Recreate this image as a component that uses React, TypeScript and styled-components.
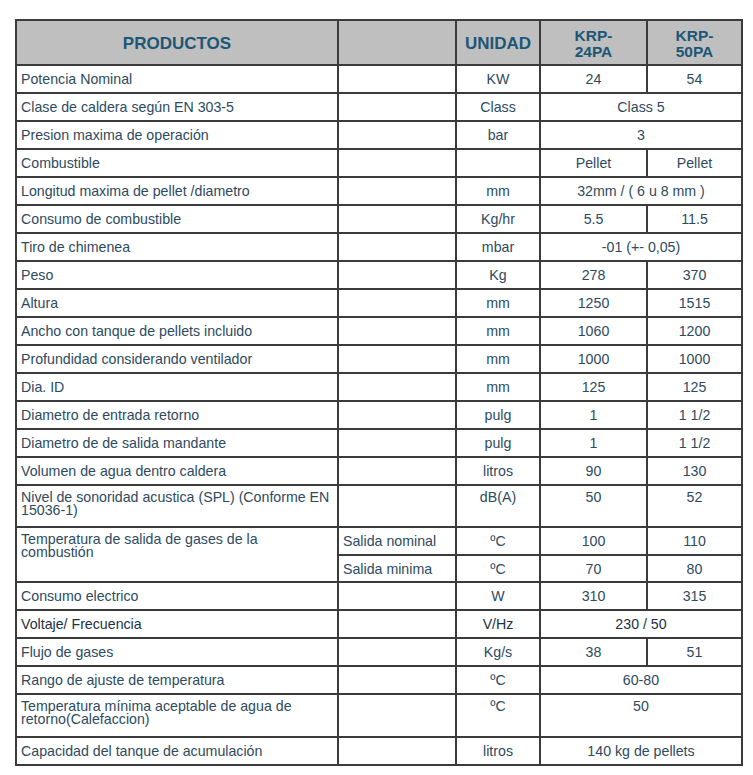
import React from "react"
import styled, { createGlobalStyle } from "styled-components"

const GlobalStyle = createGlobalStyle`
  body {
    margin: 0;
    background: #ffffff;
    font-family: "Liberation Sans", Arial, sans-serif;
  }
`

const Page = styled.div`
  padding: 19px 0 0 15px;
`

const Table = styled.table`
  border-collapse: collapse;
  table-layout: fixed;
  width: 726px;
  font-size: 14.2px;
  color: #2e4a60;
`

const HeadRow = styled.tr`
  height: 45px;
  background: #bfbfbf;
`

const HeadCell = styled.th`
  border: 2px solid #3b3b3b;
  padding: 2px 0 0;
  font-size: 17px;
  font-weight: bold;
  color: #1d5676;
  text-align: center;
  vertical-align: middle;
  line-height: 20px;
`

const ModelLine = styled.span`
  display: block;
  font-size: 15.5px;
  line-height: 15.5px;
`

const Row = styled.tr<{ $h?: number }>`
  height: ${p => p.$h || 28}px;
`

const Cell = styled.td<{ $center?: boolean; $top?: boolean; $dark?: boolean }>`
  border: 2px solid #3b3b3b;
  padding: ${p => (p.$top ? "5px 4px 0" : "0 4px")};
  text-align: ${p => (p.$center ? "center" : "left")};
  vertical-align: ${p => (p.$top ? "top" : "middle")};
  line-height: ${p => (p.$top ? "13px" : "16px")};
  color: ${p => (p.$dark ? "#1c3142" : "inherit")};
  white-space: normal;
`

type Spec = {
  label: string
  unit: string
  a?: string
  b?: string
  span?: boolean
  tall?: number
  dark?: boolean
}

const rows: Spec[] = [
  { label: "Potencia Nominal", unit: "KW", a: "24", b: "54" },
  { label: "Clase de caldera según EN 303-5", unit: "Class", a: "Class 5", span: true },
  { label: "Presion maxima de operación", unit: "bar", a: "3", span: true },
  { label: "Combustible", unit: "", a: "Pellet", b: "Pellet" },
  { label: "Longitud maxima de pellet /diametro", unit: "mm", a: "32mm / ( 6 u 8 mm )", span: true },
  { label: "Consumo de combustible", unit: "Kg/hr", a: "5.5", b: "11.5" },
  { label: "Tiro de chimenea", unit: "mbar", a: "-01 (+- 0,05)", span: true },
  { label: "Peso", unit: "Kg", a: "278", b: "370" },
  { label: "Altura", unit: "mm", a: "1250", b: "1515" },
  { label: "Ancho con tanque de pellets incluido", unit: "mm", a: "1060", b: "1200" },
  { label: "Profundidad considerando ventilador", unit: "mm", a: "1000", b: "1000" },
  { label: "Dia. ID", unit: "mm", a: "125", b: "125" },
  { label: "Diametro de entrada retorno", unit: "pulg", a: "1", b: "1 1/2" },
  { label: "Diametro de de salida mandante", unit: "pulg", a: "1", b: "1 1/2" },
  { label: "Volumen de agua dentro caldera", unit: "litros", a: "90", b: "130" },
  { label: "Nivel de sonoridad acustica (SPL) (Conforme EN 15036-1)", unit: "dB(A)", a: "50", b: "52", tall: 42 },
]

const tail: Spec[] = [
  { label: "Consumo electrico", unit: "W", a: "310", b: "315" },
  { label: "Voltaje/ Frecuencia", unit: "V/Hz", a: "230 / 50", span: true, dark: true },
  { label: "Flujo de gases", unit: "Kg/s", a: "38", b: "51" },
  { label: "Rango de ajuste de temperatura", unit: "ºC", a: "60-80", span: true },
  { label: "Temperatura mínima aceptable de agua de retorno(Calefaccion)", unit: "ºC", a: "50", span: true, tall: 43 },
  { label: "Capacidad del tanque de acumulación", unit: "litros", a: "140 kg de pellets", span: true },
]

const SpecRow = ({ r }: { r: Spec }) => {
  const top = !!r.tall
  return (
    <Row $h={r.tall}>
      <Cell $top={top} $dark={r.dark}>{r.label}</Cell>
      <Cell />
      <Cell $center $top={top} $dark={r.dark}>{r.unit}</Cell>
      {r.span ? (
        <Cell $center $top={top} $dark={r.dark} colSpan={2}>{r.a}</Cell>
      ) : (
        <>
          <Cell $center $top={top}>{r.a}</Cell>
          <Cell $center $top={top}>{r.b}</Cell>
        </>
      )}
    </Row>
  )
}

const App = () => (
  <Page>
    <GlobalStyle />
    <Table>
      <colgroup>
        <col style={{ width: 322 }} />
        <col style={{ width: 118 }} />
        <col style={{ width: 84 }} />
        <col style={{ width: 107 }} />
        <col style={{ width: 95 }} />
      </colgroup>
      <thead>
        <HeadRow>
          <HeadCell>PRODUCTOS</HeadCell>
          <HeadCell />
          <HeadCell>UNIDAD</HeadCell>
          <HeadCell>
            <ModelLine>KRP-</ModelLine>
            <ModelLine>24PA</ModelLine>
          </HeadCell>
          <HeadCell>
            <ModelLine>KRP-</ModelLine>
            <ModelLine>50PA</ModelLine>
          </HeadCell>
        </HeadRow>
      </thead>
      <tbody>
        {rows.map(r => <SpecRow key={r.label} r={r} />)}
        <Row>
          <Cell $top rowSpan={2}>Temperatura de salida de gases de la combustión</Cell>
          <Cell>Salida nominal</Cell>
          <Cell $center>ºC</Cell>
          <Cell $center>100</Cell>
          <Cell $center>110</Cell>
        </Row>
        <Row $h={27}>
          <Cell>Salida minima</Cell>
          <Cell $center>ºC</Cell>
          <Cell $center>70</Cell>
          <Cell $center>80</Cell>
        </Row>
        {tail.map(r => <SpecRow key={r.label} r={r} />)}
      </tbody>
    </Table>
  </Page>
)

export default App
